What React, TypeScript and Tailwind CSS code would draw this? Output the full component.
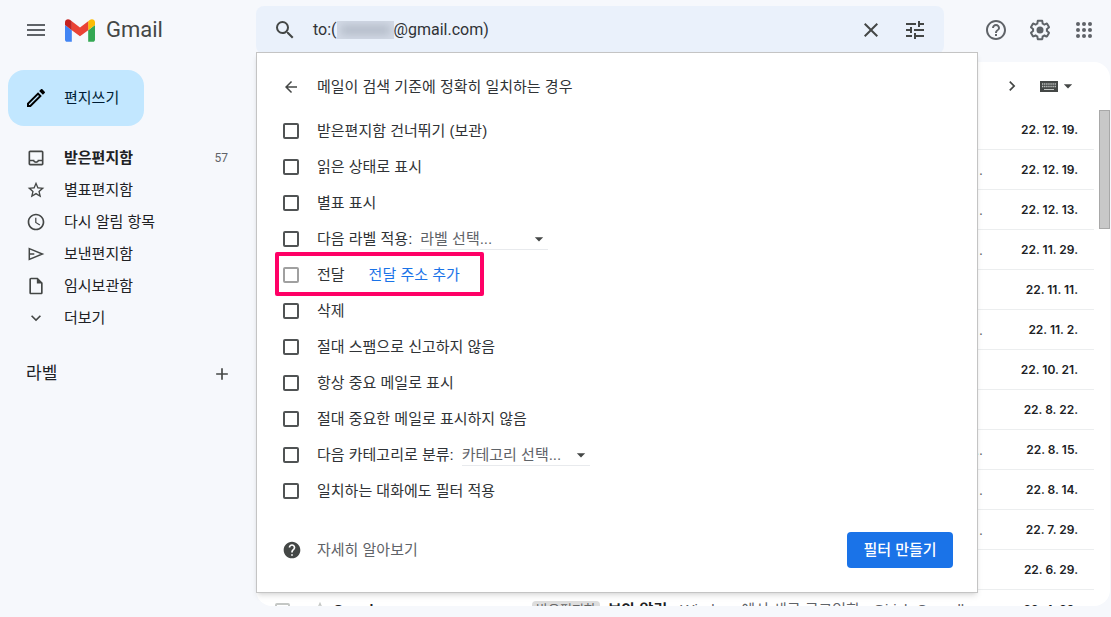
import React, { useState } from "react";
import {
  MdMenu, MdSearch, MdClose, MdTune, MdHelpOutline, MdArrowBack, MdHelp, MdArrowDropDown,
  MdOutlineInbox, MdStarBorder, MdSchedule, MdOutlineInsertDriveFile,
  MdExpandMore, MdAdd, MdChevronRight, MdOutlineEdit,
} from "react-icons/md";

function SendIcon({ className }: { className?: string }) {
  return (
    <svg viewBox="0 0 20 20" className={className} fill="none" stroke="currentColor" strokeWidth="1.5" aria-hidden="true">
      <path d="M3.3 4.6 16.4 10 3.3 15.4z" />
      <path d="M3.3 10h5" />
    </svg>
  );
}

const folders = [
  { label: "받은편지함", icon: MdOutlineInbox, count: "57" },
  { label: "별표편지함", icon: MdStarBorder },
  { label: "다시 알림 항목", icon: MdSchedule },
  { label: "보낸편지함", icon: SendIcon },
  { label: "임시보관함", icon: MdOutlineInsertDriveFile },
  { label: "더보기", icon: MdExpandMore },
];

const mails = [
  { date: "22. 12. 19.", tail: "" },
  { date: "22. 12. 19.", tail: "." },
  { date: "22. 12. 13.", tail: "." },
  { date: "22. 11. 29.", tail: "." },
  { date: "22. 11. 11.", tail: "" },
  { date: "22. 11. 2.", tail: "." },
  { date: "22. 10. 21.", tail: "" },
  { date: "22. 8. 22.", tail: "" },
  { date: "22. 8. 15.", tail: ".." },
  { date: "22. 8. 14.", tail: "." },
  { date: "22. 7. 29.", tail: "." },
  { date: "22. 6. 29.", tail: "" },
];

type Option = { id: string; label: string; select?: string; link?: string };

const options: Option[] = [
  { id: "skip", label: "받은편지함 건너뛰기 (보관)" },
  { id: "read", label: "읽은 상태로 표시" },
  { id: "star", label: "별표 표시" },
  { id: "label", label: "다음 라벨 적용:", select: "라벨 선택..." },
  { id: "forward", label: "전달", link: "전달 주소 추가" },
  { id: "delete", label: "삭제" },
  { id: "nospam", label: "절대 스팸으로 신고하지 않음" },
  { id: "important", label: "항상 중요 메일로 표시" },
  { id: "notimportant", label: "절대 중요한 메일로 표시하지 않음" },
  { id: "category", label: "다음 카테고리로 분류:", select: "카테고리 선택..." },
  { id: "apply", label: "일치하는 대화에도 필터 적용" },
];

function GmailLogo() {
  return (
    <svg viewBox="52 42 88 66" className="h-[23px] w-[30px]" aria-hidden="true">
      <path fill="#4285f4" d="M58 108h14V74L52 59v43c0 3.32 2.69 6 6 6" />
      <path fill="#34a853" d="M120 108h14c3.32 0 6-2.69 6-6V59l-20 15" />
      <path fill="#fbbc04" d="M120 48v26l20-15v-8c0-7.42-8.47-11.65-14.4-7.2" />
      <path fill="#ea4335" d="M72 74V48l24 18 24-18v26L96 92" />
      <path fill="#c5221f" d="M52 51v8l20 15V48l-5.6-4.2c-5.94-4.45-14.4-.22-14.4 7.2" />
    </svg>
  );
}

function Gear() {
  return (
    <svg viewBox="0 0 24 24" className="size-6" aria-hidden="true">
      <path
        fill="currentColor"
        d="M13.85 22.25h-3.7c-.74 0-1.36-.54-1.45-1.27l-.27-1.89c-.27-.14-.53-.29-.79-.46l-1.8.72c-.7.26-1.47-.03-1.81-.65L2.2 15.53c-.35-.66-.2-1.44.36-1.88l1.53-1.19c-.01-.15-.02-.3-.02-.46 0-.15.01-.31.02-.46l-1.52-1.19c-.59-.45-.74-1.26-.37-1.88l1.85-3.19c.34-.62 1.11-.9 1.79-.63l1.81.73c.26-.17.52-.32.78-.46l.27-1.91c.09-.7.71-1.25 1.44-1.25h3.7c.74 0 1.36.54 1.45 1.27l.27 1.89c.27.14.53.29.79.46l1.8-.72c.71-.26 1.48.03 1.82.65l1.84 3.18c.36.66.2 1.44-.36 1.88l-1.52 1.19c.01.15.02.3.02.46s-.01.31-.02.46l1.52 1.19c.56.45.72 1.23.37 1.86l-1.86 3.22c-.34.62-1.11.9-1.8.63l-1.8-.72c-.26.17-.52.32-.78.46l-.27 1.91c-.1.68-.72 1.22-1.46 1.22zm-3.23-2h2.76l.37-2.55.53-.22c.44-.18.88-.44 1.34-.78l.45-.34 2.38.96 1.38-2.4-2.03-1.58.07-.56c.03-.26.06-.51.06-.78s-.03-.53-.06-.78l-.07-.56 2.03-1.58-1.39-2.4-2.39.96-.45-.35c-.42-.32-.87-.58-1.33-.77l-.52-.22-.37-2.55h-2.76l-.37 2.55-.53.21c-.44.19-.88.44-1.34.79l-.45.33-2.38-.95-1.39 2.39 2.03 1.58-.07.56a7 7 0 0 0-.06.79c0 .26.02.53.06.78l.07.56-2.03 1.58 1.38 2.4 2.39-.96.45.35c.43.33.86.58 1.33.77l.53.22.38 2.55z"
      />
      <circle fill="currentColor" cx="12" cy="12" r="3.5" />
    </svg>
  );
}

function AppsGrid() {
  return (
    <svg viewBox="0 0 24 24" className="size-6" fill="currentColor" aria-hidden="true">
      {[6, 12, 18].map((y) => [6, 12, 18].map((x) => <circle key={x + "-" + y} cx={x} cy={y} r="2" />))}
    </svg>
  );
}

function KeyboardIcon() {
  return (
    <svg viewBox="0 0 18 11" className="h-[11px] w-[18px]" aria-hidden="true">
      <rect width="18" height="11" fill="#444746" />
      <path d="M2 3h14M2 5.5h14" stroke="#c4c7c5" strokeWidth="1.4" strokeDasharray="1.3 0.8" />
      <path d="M4 8.5h10" stroke="#c4c7c5" strokeWidth="1.2" />
    </svg>
  );
}

function Checkbox({ id, muted }: { id: string; muted?: boolean }) {
  return (
    <input
      id={id}
      type="checkbox"
      className={
        "size-4 shrink-0 appearance-none rounded-xs border-2 bg-white checked:bg-[#1a73e8] " +
        (muted ? "border-[#a0a0a0]" : "border-[#505354]")
      }
    />
  );
}

function Sidebar() {
  return (
    <aside className="w-64 shrink-0 pt-2">
      <button className="ml-2 flex h-14 items-center gap-4 rounded-2xl bg-[#c2e7ff] pr-[25px] pl-4 text-[#001d35]">
        <MdOutlineEdit className="size-6 text-black" />
        <span>편지쓰기</span>
      </button>
      <nav className="mt-4">
        {folders.map(({ label, icon: Icon, count }) => (
          <a
            key={label}
            href="#"
            className={"flex h-8 items-center gap-[18px] pr-7 pl-[26px] " + (count ? "font-bold" : "")}
          >
            <Icon className="size-5 text-[#444746]" />
            <span className="flex-1">{label}</span>
            {count && <span className="font-[Roboto] text-xs font-normal text-[#5f6368]">{count}</span>}
          </a>
        ))}
      </nav>
      <div className="mt-5 flex h-10 items-center justify-between pr-6 pl-[26px]">
        <h2 className="text-[17px]">라벨</h2>
        <button aria-label="새 라벨 만들기">
          <MdAdd className="size-5 text-[#444746]" />
        </button>
      </div>
    </aside>
  );
}

function FilterPanel() {
  return (
    <section className="absolute top-[46px] right-[-34px] left-0 z-10 border border-[#c4c4c4] bg-white pt-4 pr-6 pb-6 pl-[25px] text-[#303336] shadow-md">
      <div className="flex h-9 items-center gap-[17px]">
        <button aria-label="뒤로">
          <MdArrowBack className="size-[18px] text-[#444746]" />
        </button>
        <h1>메일이 검색 기준에 정확히 일치하는 경우</h1>
      </div>
      <ul className="mt-2">
        {options.map((o) => (
          <li key={o.id} className="relative flex h-9 items-center pl-px">
            {o.link && <div className="pointer-events-none absolute -top-[5px] -left-[7px] h-11 w-[209px] rounded-xs border-4 border-[#ff0066]" />}
            <Checkbox id={o.id} muted={!!o.link} />
            <label htmlFor={o.id} className="ml-[18px]">{o.label}</label>
            {o.select && (
              <span className="relative ml-2 flex w-32 border-b border-[#e8eaed]">
                <select aria-label={o.label} className="w-full appearance-none bg-transparent text-[#5f6368]">
                  <option>{o.select}</option>
                </select>
                <MdArrowDropDown className="pointer-events-none absolute top-0 -right-px size-5 text-[#444746]" />
              </span>
            )}
            {o.link && <a href="#" className="ml-6 text-[#1a73e8]">{o.link}</a>}
          </li>
        ))}
      </ul>
      <div className="mt-[23px] flex h-9 items-center">
        <MdHelp className="size-5 text-[#444746]" />
        <a href="#" className="ml-[15px] flex-1 text-[#5f6368]">자세히 알아보기</a>
        <button className="h-9 min-w-[106px] rounded bg-[#1a73e8] px-4 font-medium text-white">필터 만들기</button>
      </div>
    </section>
  );
}

function Header() {
  const [query, setQuery] = useState("@gmail.com)");
  return (
    <header className="flex h-[62px] shrink-0 items-start text-[#5f6368]">
      <div className="flex h-[60px] w-64 shrink-0 items-center pl-6">
        <button aria-label="메뉴"><MdMenu className="size-6" /></button>
        <a href="#" className="ml-[17px] flex items-center gap-[11px]">
          <GmailLogo />
          <span className="font-[Roboto] text-[22px] text-[#444746]">Gmail</span>
        </a>
      </div>
      <div className="relative mt-1.5 flex-1">
        <div className="flex h-12 items-center rounded-lg bg-[#eaf1fb] pr-[17px] pl-[17px] font-[Roboto] text-base text-[#303336]">
          <button aria-label="검색"><MdSearch className="size-6 text-[#444746]" /></button>
          <span className="ml-4">to:(</span>
          <span className="h-[18px] w-[57px] overflow-hidden bg-[#d3dae6] px-1 py-1">
            <span className="block h-[10px] w-full bg-[#b4bcc9] blur-xs" />
          </span>
          <input
            aria-label="메일 검색"
            value={query}
            onChange={(e) => setQuery(e.target.value)}
            className="min-w-0 flex-1 bg-transparent outline-none"
          />
          <button aria-label="검색어 삭제"><MdClose className="size-6 text-[#444746]" /></button>
          <button aria-label="검색 옵션 표시" className="ml-5"><MdTune className="size-6 text-[#444746]" /></button>
        </div>
        <FilterPanel />
      </div>
      <div className="flex h-[60px] w-[167px] shrink-0 items-center justify-end gap-5 pr-[15px]">
        <button aria-label="지원"><MdHelpOutline className="size-6" /></button>
        <button aria-label="설정"><Gear /></button>
        <button aria-label="앱"><AppsGrid /></button>
      </div>
    </header>
  );
}

function MailList() {
  return (
    <main className="relative mr-px mb-[11px] flex min-w-0 flex-1 flex-col overflow-hidden rounded-2xl bg-white">
      <div className="flex h-12 shrink-0 items-center justify-end pr-8 text-[#444746]">
        <button aria-label="다음" className="mr-[18px]"><MdChevronRight className="size-5" /></button>
        <button aria-label="입력 도구" className="flex items-center">
          <KeyboardIcon />
          <MdArrowDropDown className="size-5" />
        </button>
      </div>
      <div className="min-h-0 flex-1 overflow-hidden pr-4">
        <table className="w-full table-fixed border-separate border-spacing-0">
          <colgroup>
            <col className="w-[77px]" />
            <col className="w-[199px]" />
            <col />
            <col className="w-[111px]" />
          </colgroup>
          <tbody>
            {mails.map((m, i) => (
              <tr key={i} className="h-10">
                <td className="border-b border-[#eceeef]" />
                <td className="border-b border-[#eceeef]" />
                <td className="border-b border-[#eceeef] text-right text-sm text-[#5f6368]">{m.tail}</td>
                <td className="border-b border-[#eceeef] pr-4 text-right font-[Inter] text-xs font-semibold">{m.date}</td>
              </tr>
            ))}
            <tr className="h-10">
              <td>
                <span className="flex items-center gap-5 pl-[19px]">
                  <input type="checkbox" aria-label="메일 선택" className="size-[15px] appearance-none rounded-xs border-2 border-[#c4c7c5]" />
                  <MdStarBorder className="size-5 text-[#c4c7c5]" />
                </span>
              </td>
              <td className="text-sm font-bold">Google</td>
              <td className="overflow-hidden whitespace-nowrap">
                <span className="flex items-center">
                  <span className="mr-2 rounded bg-[#dddddd] px-1 text-[13px] leading-[18px] text-[#666666]">받은편지함</span>
                  <b>보안 알림</b>
                  <span className="ml-1 text-[#5f6368]">- Windows에서 새로 로그인함 - Girish Cornell</span>
                </span>
              </td>
              <td className="pr-4 text-right font-[Inter] text-xs font-semibold">22. 4. 29.</td>
            </tr>
          </tbody>
        </table>
      </div>
      <div className="absolute top-12 right-0 h-[119px] w-[11px] border border-[#a8a8a8] bg-[#c8c8c8]" />
    </main>
  );
}

export default function App() {
  return (
    <div className="flex h-screen flex-col overflow-hidden bg-[#f6f8fc] font-['Liberation_Sans','Noto_Sans_CJK_KR',sans-serif] text-[15px] leading-5 text-[#202124]">
      <Header />
      <div className="flex min-h-0 flex-1">
        <Sidebar />
        <MailList />
      </div>
    </div>
  );
}
